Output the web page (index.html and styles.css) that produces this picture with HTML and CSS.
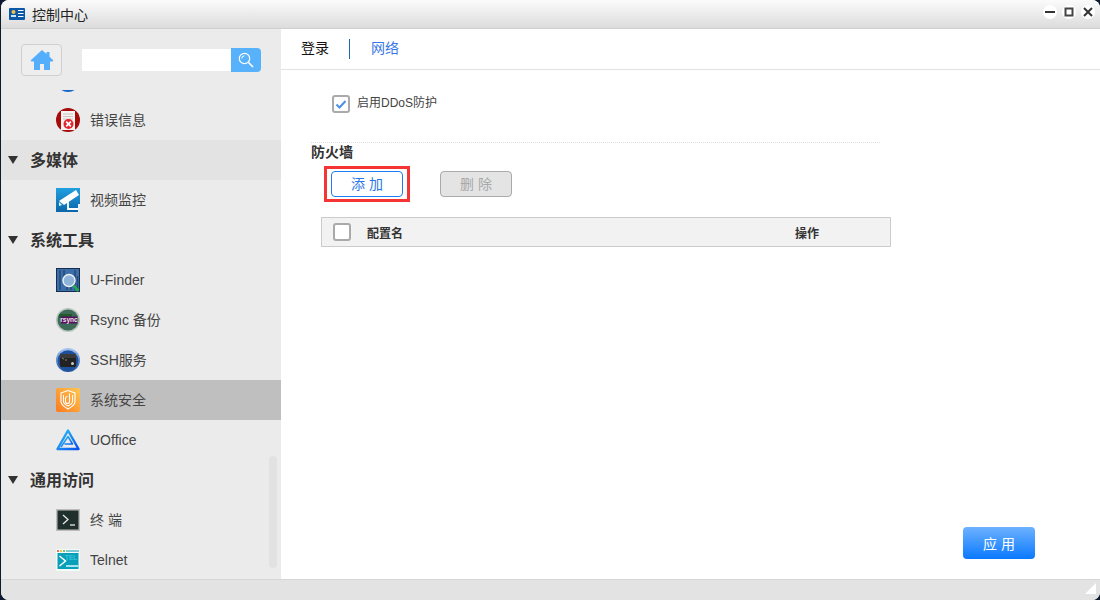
FILE: index.html
```html
<!DOCTYPE html>
<html lang="zh">
<head>
<meta charset="utf-8">
<title>控制中心</title>
<link rel="stylesheet" href="styles.css">
</head>
<body>
<div class="window">
  <header class="titlebar">
    <svg class="app-icon" width="16" height="12" viewBox="0 0 16 12"><rect width="16" height="12" rx="1" fill="#0b58a8"/><circle cx="4.5" cy="4" r="2" fill="#f5c04a"/><rect x="2" y="7" width="5" height="2" fill="#cfe3f7"/><path d="M9 2.5h5.5M9 5.5h5.5M9 8.5h5.5" stroke="#fff" stroke-width="1.2"/></svg>
    <span class="title">控制中心</span>
    <div class="win-controls">
      <span class="win-btn"><svg width="14" height="14" viewBox="0 0 14 14"><path d="M2 7h10" stroke="#333" stroke-width="2"/></svg></span>
      <span class="win-btn"><svg width="14" height="14" viewBox="0 0 14 14"><rect x="3.5" y="3.5" width="7" height="7" fill="none" stroke="#444" stroke-width="2"/></svg></span>
      <span class="win-btn"><svg width="14" height="14" viewBox="0 0 14 14"><path d="M3 3l8 8M11 3l-8 8" stroke="#333" stroke-width="2"/></svg></span>
    </div>
  </header>
  <div class="body">
    <aside class="sidebar">
      <div class="side-top">
        <button class="home-btn" type="button"><svg width="24" height="22" viewBox="0 0 24 22"><path d="M12 1L0.500 11.500l1 1H4V21h6v-6h4v6h6v-8.500h2.500l1-1-4-3.700V3h-3v2z" fill="#55aefb"/></svg></button>
        <div class="search">
          <div class="search-input"></div>
          <button class="search-btn" type="button"><svg width="16" height="16" viewBox="0 0 16 16"><circle cx="6.500" cy="6.500" r="5.200" fill="none" stroke="#fff" stroke-width="1.200"/><path d="M10.500 10.500L15 15" stroke="#fff" stroke-width="1.600"/><path d="M3.800 6.500A2.800 2.800 0 0 1 6.500 3.800" fill="none" stroke="#fff"/></svg></button>
        </div>
      </div>
      <nav class="nav">
        <div class="row item"><svg class="ico" viewBox="0 0 24 24"><circle cx="12" cy="12" r="12" fill="#1565c8"/></svg></div>
        <div class="row item"><svg class="ico" viewBox="0 0 24 24"><circle cx="12" cy="12" r="12" fill="#a40b0b"/><rect x="5" y="3" width="14" height="19" fill="#f6f2ef"/><path d="M7 6h10M7 8.500h10M7 11h10" stroke="#c9c4c0"/><circle cx="12.500" cy="16" r="5" fill="#e0272f"/><path d="M10.200 13.700l4.600 4.600M14.800 13.700l-4.600 4.600" stroke="#fff" stroke-width="1.700"/></svg><span>错误信息</span></div>
        <div class="row group"><i class="tri"></i><span>多媒体</span></div>
        <div class="row item"><svg class="ico" viewBox="0 0 24 24"><defs><linearGradient id="cam" x1="0" y1="0" x2="0" y2="1"><stop offset="0" stop-color="#22a0e0"/><stop offset="1" stop-color="#0c65a8"/></linearGradient></defs><rect width="24" height="24" fill="url(#cam)"/><path d="M3 13L20 2l3 5L8 17z" fill="#fff"/><path d="M3 14l3 3-3 1z" fill="#dff"/><path d="M12 14v7h10M23 16v8" fill="none" stroke="#fff" stroke-width="1.800"/></svg><span>视频监控</span></div>
        <div class="row group plain"><i class="tri"></i><span>系统工具</span></div>
        <div class="row item"><svg class="ico" viewBox="0 0 24 24"><rect width="24" height="24" fill="#162c4e"/><rect x="1" y="1" width="22" height="22" fill="#3c6ea8"/><path d="M4 2v20M8 2v7M11 19v3M15 19v3M19 2v20M21.500 8v14" stroke="#24497c" stroke-width="1.500"/><circle cx="13" cy="12.500" r="6" fill="#8fb2d8" stroke="#e8eef4" stroke-width="1.500"/><path d="M17.500 17.500l5 5.500" stroke="#22a84f" stroke-width="2.800"/></svg><span>U-Finder</span></div>
        <div class="row item"><svg class="ico" viewBox="0 0 24 24"><circle cx="12" cy="12" r="12" fill="#b9c4bf"/><circle cx="12" cy="12" r="10.500" fill="#3d6b58"/><rect x="3" y="6" width="13" height="4" fill="#1f5a2c"/><rect x="5" y="8.500" width="16" height="7" fill="#5c0e63"/><text x="13" y="14.200" class="rsync-text">rsync</text></svg><span>Rsync 备份</span></div>
        <div class="row item"><svg class="ico" viewBox="0 0 24 24"><defs><linearGradient id="ssh" x1="0" y1="0" x2="0" y2="1"><stop offset="0" stop-color="#a9c8f5"/><stop offset="1" stop-color="#1c4f9e"/></linearGradient></defs><circle cx="12" cy="12" r="12" fill="url(#ssh)"/><circle cx="12" cy="12.500" r="10.300" fill="#1e4f9a"/><rect x="4" y="6" width="16" height="13" rx="1.500" fill="#222"/><rect x="4" y="6" width="16" height="4" fill="#3a3a3a"/><path d="M6 10l2 1.200M9 12h2" stroke="#999" stroke-width=".8"/><circle cx="16.500" cy="15.500" r="1.500" fill="#ccc"/></svg><span>SSH服务</span></div>
        <div class="row item active"><svg class="ico" viewBox="0 0 24 24"><defs><linearGradient id="shd" x1="0" y1="1" x2="1" y2="0"><stop offset="0" stop-color="#fb7a1e"/><stop offset="1" stop-color="#fdc752"/></linearGradient></defs><rect width="24" height="24" rx="2" fill="url(#shd)"/><path d="M5 5L12 2.500l7 2.500v8.500c0 3.500-3.500 5.500-7 7.500-3.500-2-7-4-7-7.500z" fill="none" stroke="#fff" stroke-width="1.100"/><path d="M7.500 7v6.500c0 2 2.500 3.500 4.500 4.500 2-1 4.500-2.500 4.500-4.500V7" fill="none" stroke="#fff" stroke-width="1.100"/><path d="M13.500 5.500v8a2 2 0 0 1-4 0V10.500a2 2 0 0 1 2-2" fill="none" stroke="#fff" stroke-width="1.100"/></svg><span>系统安全</span></div>
        <div class="row item"><svg class="ico" viewBox="0 0 24 24"><defs><linearGradient id="uo" x1="0" y1="0" x2="1" y2="1"><stop offset="0" stop-color="#2cc6f5"/><stop offset="1" stop-color="#0a4fee"/></linearGradient></defs><path d="M12 2.500L22.500 21H1.500z" fill="none" stroke="url(#uo)" stroke-width="2.400" stroke-linejoin="round"/><path d="M5 19L12 8.500l4.500 7.500H8.500" fill="none" stroke="url(#uo)" stroke-width="1.500" stroke-linejoin="round"/></svg><span>UOffice</span></div>
        <div class="row group plain"><i class="tri"></i><span>通用访问</span></div>
        <div class="row item"><svg class="ico" viewBox="0 0 24 24"><rect width="24" height="22" y="1" fill="#bdbdbd"/><rect x="1.500" y="2.500" width="21" height="19" fill="#1f302c"/><path d="M7 7l5 4.500-5 4.500" fill="none" stroke="#e8e8e8" stroke-width="1.300"/><path d="M14 17h5" stroke="#e8e8e8" stroke-width="1.300"/></svg><span>终 端</span></div>
        <div class="row item"><svg class="ico" viewBox="0 0 24 24"><rect width="24" height="22" y="1" rx="1" fill="#f4fbfb"/><rect x="1" y="2" width="2" height="2" fill="#f26d5b"/><rect x="4" y="2" width="2" height="2" fill="#f2c14e"/><rect x="7" y="2" width="2" height="2" fill="#7cc36a"/><rect x="10" y="2" width="13" height="2" fill="#7fc8d4"/><rect x="1.500" y="5" width="21" height="16" fill="#0a9fb8"/><text x="9" y="11.500" class="tel-text">TEL</text><rect x="10" y="17" width="12.500" height="2" fill="#9fe4ee"/><path d="M3.500 8l6 5-6 5" fill="none" stroke="#fff" stroke-width="1.500"/></svg><span>Telnet</span></div>
      </nav>
      <div class="scrollbar"></div>
    </aside>
    <main class="main">
      <div class="tabs">
        <span class="tab current">登录</span>
        <span class="tab-sep"></span>
        <span class="tab link">网络</span>
      </div>
      <div class="content">
        <label class="ddos"><span class="check on"><svg width="14" height="14" viewBox="0 0 14 14"><path d="M2.500 7.500l3 3 6-6.500" fill="none" stroke="#4f8fe6" stroke-width="2"/></svg></span><span class="ddos-text">启用DDoS防护</span></label>
        <div class="dotted"></div>
        <h2 class="section-title">防火墙</h2>
        <div class="toolbar">
          <div class="highlight"><button class="btn add" type="button">添 加</button></div>
          <button class="btn del" type="button">删 除</button>
        </div>
        <div class="thead">
          <span class="check"></span>
          <span class="col-name">配置名</span>
          <span class="col-op">操作</span>
        </div>
        <div class="actions"><button class="apply" type="button">应 用</button></div>
      </div>
    </main>
  </div>
  <footer class="statusbar"><i class="grip"></i></footer>
</div>
</body>
</html>
```
FILE: styles.css
```css
* { box-sizing: border-box; }
html, body { margin: 0; height: 100%; }
body {
  background: #0e1a30;
  font-family: "Liberation Sans", "Noto Sans CJK SC", sans-serif;
  overflow: hidden;
}
button { font-family: inherit; padding: 0; }
.window {
  margin-left: 1px;
  width: 1099px;
  height: 600px;
  display: flex;
  flex-direction: column;
  border-radius: 8px;
  overflow: hidden;
  background: #fff;
}
.titlebar {
  height: 29px;
  flex: none;
  display: flex;
  align-items: center;
  padding: 0 5px 1px 8px;
  background: linear-gradient(#fbfbfb, #dcdcdc);
  border-bottom: 1px solid #cfcfcf;
}
.app-icon { margin-right: 7px; }
.title { font-size: 14px; color: #222; }
.win-controls { margin-left: auto; display: flex; gap: 5px; margin-top: -3px; }
.win-btn {
  width: 14px; height: 14px;
  background: #fff;
  border-radius: 50%;
  display: flex;
}
.body { flex: 1; display: flex; min-height: 0; }
.sidebar {
  width: 280px;
  flex: none;
  display: flex;
  flex-direction: column;
  background: #ebebeb;
  position: relative;
}
.side-top {
  height: 61px;
  flex: none;
  display: flex;
  align-items: flex-start;
  padding: 15px 0 0 20px;
}
.home-btn {
  width: 41px; height: 32px;
  background: #eee;
  border: 1px solid #cfcfcf;
  border-radius: 4px;
  display: flex;
  align-items: center;
  justify-content: center;
}
.search { display: flex; align-items: center; margin: 4px 0 0 20px; }
.search-input { width: 149px; height: 22px; background: #fff; }
.search-btn {
  width: 30px; height: 24px;
  background: #57b2fb;
  border: 0;
  border-radius: 0 4px 4px 0;
  display: flex;
  align-items: center;
  justify-content: center;
}
.nav {
  flex: 1;
  min-height: 0;
  margin-bottom: -1px;
  overflow: hidden;
  display: flex;
  flex-direction: column;
  justify-content: flex-end;
}
.row { height: 40px; flex: none; display: flex; align-items: center; }
.item { padding-left: 55px; font-size: 14px; line-height: 20px; color: #444; }
.item .ico { width: 24px; height: 24px; margin-right: 10px; flex: none; }
.item.active { background: #bfbfbf; }
.group {
  padding-left: 7px;
  font-size: 16px;
  line-height: 22px;
  font-weight: 700;
  color: #333;
  background: #e3e3e3;
}
.group span { padding-top: 2px; }
.group.plain { background: transparent; }
.tri {
  width: 0; height: 0;
  border-left: 5px solid transparent;
  border-right: 5px solid transparent;
  border-top: 8px solid #333;
  margin-right: 12px;
}
.rsync-text { font: 700 6.500px "Liberation Sans", sans-serif; fill: #e8e8e8; text-anchor: middle; }
.tel-text { font: 700 6.500px "Liberation Sans", sans-serif; fill: #35c3d8; }
.scrollbar {
  position: absolute;
  left: 268px; top: 427px;
  width: 8px; height: 112px;
  border-radius: 4px;
  background: #e2e2e2;
}
.main { flex: 1; min-width: 0; display: flex; flex-direction: column; background: #fff; }
.tabs {
  height: 41px;
  flex: none;
  display: flex;
  align-items: center;
  padding: 0 0 2px 20px;
  border-bottom: 1px solid #e2e2e2;
  font-size: 14px;
  line-height: 20px;
}
.tab.current { color: #111; }
.tab.link { color: #3a78e8; }
.tab-sep { width: 1px; height: 20px; background: #1f67bd; margin: 2px 21px 0 20px; }
.content { flex: 1; min-height: 0; display: flex; flex-direction: column; padding: 25px 0 20px 30px; }
.ddos { display: flex; align-items: center; height: 18px; flex: none; margin-left: 21px; font-size: 12px; line-height: 16px; color: #444; }
.ddos-text { padding-bottom: 3px; }
.check {
  width: 18px; height: 18px;
  flex: none;
  border: 2px solid #aaa;
  border-radius: 3px;
  background: #fff;
  display: flex;
  align-items: center;
  justify-content: center;
}
.check.on { margin-right: 7px; }
.dotted { width: 569px; border-top: 1px dotted #dcdcdc; margin-top: 29px; }
.section-title { margin: 1px 0 0; height: 22px; line-height: 16px; font-size: 14px; font-weight: 700; color: #333; }
.toolbar { display: flex; align-items: flex-start; margin-left: 13px; gap: 30px; }
.highlight { border: 3px solid #f53535; padding: 2px 4px; display: flex; }
.btn { width: 72px; height: 26px; border-radius: 4px; font-size: 14px; line-height: 20px; background: #fff; }
.add { border: 1px solid #1e7cf5; color: #2a78e8; }
.del { border: 1px solid #aaa; background: #e4e4e4; color: #a8a8a8; margin-top: 5px; }
.thead {
  width: 570px;
  height: 30px;
  flex: none;
  margin: 15px 0 0 10px;
  display: flex;
  align-items: center;
  padding-left: 11px;
  background: #f2f2f2;
  border: 1px solid #ccc;
  font-size: 12px;
  font-weight: 700;
  color: #333;
}
.col-name { margin-left: 16px; }
.col-op { margin-left: 392px; }
.actions { margin-top: auto; padding-left: 652px; }
.apply {
  width: 72px; height: 32px;
  border: 0;
  border-radius: 4px;
  background: linear-gradient(#6db2ff, #0a79ff);
  color: #fff;
  font-size: 14px;
}
.statusbar {
  height: 21px;
  flex: none;
  background: #e3e3e3;
  border-top: 1px solid #d6d6d6;
  display: flex;
  justify-content: flex-end;
  align-items: flex-start;
  padding: 3px 4px 0 0;
}
.grip {
  width: 0; height: 0;
  border-left: 11px solid transparent;
  border-bottom: 11px solid #fff;
}
```
